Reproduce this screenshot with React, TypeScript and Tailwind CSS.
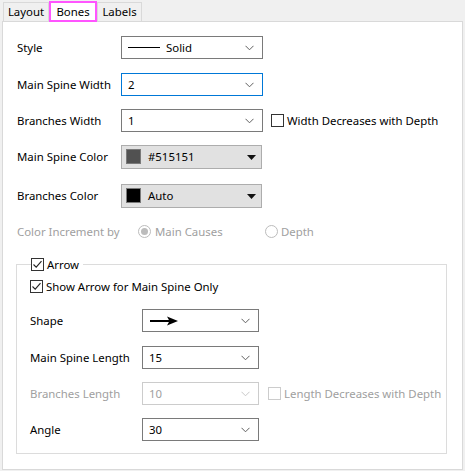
import React from "react";

const font = { fontFamily: '"Segoe UI", "Noto Sans", "Open Sans", sans-serif' };

function Chevron({ disabled }: { disabled?: boolean }) {
  return (
    <svg width="9" height="6" viewBox="0 0 9 6" className="shrink-0">
      <path d="M0.5 0.8 L4.5 4.8 L8.5 0.8" fill="none" stroke={disabled ? "#c8c8c8" : "#606060"} strokeWidth="1" />
    </svg>
  );
}

function Combo({
  children,
  width = "w-[142px]",
  focused,
  disabled,
}: {
  children: React.ReactNode;
  width?: string;
  focused?: boolean;
  disabled?: boolean;
}) {
  const border = focused ? "border-[#0078d7]" : disabled ? "border-[#cccccc]" : "border-[#7a7a7a]";
  return (
    <div
      className={`${width} h-[23px] border ${border} bg-white flex items-center justify-between pl-[6px] pr-[8px] ${
        disabled ? "text-[#a0a0a0]" : "text-black"
      }`}
    >
      <div className="flex items-center">{children}</div>
      <Chevron disabled={disabled} />
    </div>
  );
}

function ColorCombo({ swatch, label }: { swatch: string; label: string }) {
  return (
    <div className="w-[141px] h-[24px] border border-[#adadad] bg-[#e1e1e1] flex items-center justify-between pl-[4px] pr-[5px] text-black">
      <div className="flex items-center gap-[7px]">
        <div className="w-[15px] h-[15px] border border-[#7a7a7a]" style={{ backgroundColor: swatch }} />
        <span>{label}</span>
      </div>
      <svg width="9" height="5" viewBox="0 0 9 5">
        <path d="M0 0 H9 L4.5 5 Z" fill="#111" />
      </svg>
    </div>
  );
}

function Checkbox({ checked, disabled }: { checked?: boolean; disabled?: boolean }) {
  return (
    <div
      className={`w-[13px] h-[13px] border ${disabled ? "border-[#cccccc]" : "border-[#333333]"} bg-white flex items-center justify-center shrink-0`}
    >
      {checked && (
        <svg width="11" height="11" viewBox="0 0 11 11">
          <path d="M1.5 5.5 L4.2 8.2 L9.5 2.2" fill="none" stroke="#222" strokeWidth="1.1" />
        </svg>
      )}
    </div>
  );
}

function Radio({ selected }: { selected?: boolean }) {
  return (
    <div className="w-[13px] h-[13px] rounded-full border border-[#bcbcbc] bg-white flex items-center justify-center shrink-0">
      {selected && <div className="w-[7px] h-[7px] rounded-full bg-[#bcbcbc]" />}
    </div>
  );
}

function Row({ label, children, mt, labelW = "w-[104px]", dim }: { label: string; children: React.ReactNode; mt: string; labelW?: string; dim?: boolean }) {
  return (
    <div className={`flex items-center ${mt}`}>
      <div className={`${labelW} whitespace-nowrap ${dim ? "text-[#a0a0a0]" : "text-black"}`}>{label}</div>
      {children}
    </div>
  );
}

export default function App() {
  return (
    <div className="w-[465px] h-[471px] bg-[#f0f0f0] flex flex-col text-[11.4px]" style={font}>
      <div className="flex items-end h-[21px] pl-[3px] text-black">
        <div className="h-[19px] w-[46px] border border-b-0 border-[#d9d9d9] bg-[#f0f0f0] flex items-center justify-center">Layout</div>
        <div className="h-[21px] w-[48px] border-2 border-[#ff55ff] bg-white flex items-center justify-center -mb-px relative z-10">
          Bones
        </div>
        <div className="h-[19px] w-[45px] border border-b-0 border-[#d9d9d9] bg-[#f0f0f0] flex items-center justify-center">Labels</div>
      </div>
      <div className="mx-[2px] w-[461px] h-[449px] border border-[#d9d9d9] bg-white flex flex-col pl-[14px]">
        <Row label="Style" mt="mt-[14px]">
          <Combo>
            <div className="w-[32px] h-px bg-black mr-[6px]" />
            <span>Solid</span>
          </Combo>
        </Row>
        <Row label="Main Spine Width" mt="mt-[14px]">
          <Combo focused>2</Combo>
        </Row>
        <Row label="Branches Width" mt="mt-[13px]">
          <Combo>1</Combo>
          <div className="flex items-center ml-[8px] gap-[3px] whitespace-nowrap">
            <Checkbox />
            <span>Width Decreases with Depth</span>
          </div>
        </Row>
        <Row label="Main Spine Color" mt="mt-[13px]">
          <ColorCombo swatch="#515151" label="#515151" />
        </Row>
        <Row label="Branches Color" mt="mt-[15px]">
          <ColorCombo swatch="#000000" label="Auto" />
        </Row>
        <div className="flex items-center mt-[15px] h-[17px] text-[#a0a0a0]">
          <div className="w-[121px]">Color Increment by</div>
          <div className="flex items-center gap-[4px] w-[127px]">
            <Radio selected />
            <span>Main Causes</span>
          </div>
          <div className="flex items-center gap-[3px]">
            <Radio />
            <span>Depth</span>
          </div>
        </div>
        <fieldset className="mt-[16px] -ml-px w-[431px] border border-[#dcdcdc] pl-[13px] pb-[12px] pt-0">
          <legend className="ml-[1px] pl-0 pr-[4px] text-black">
            <div className="flex items-center gap-[3px]">
              <Checkbox checked />
              <span>Arrow</span>
            </div>
          </legend>
          <div className="flex items-center gap-[3px] text-black mt-[5px]">
            <Checkbox checked />
            <span>Show Arrow for Main Spine Only</span>
          </div>
          <Row label="Shape" mt="mt-[14px]" labelW="w-[112px]">
            <Combo width="w-[117px]">
              <svg width="28" height="10" viewBox="0 0 28 10" className="ml-px">
                <path d="M0 5 H20" stroke="#000" strokeWidth="2" />
                <path d="M28 5 L17 0.5 L19.5 5 L17 9.5 Z" fill="#000" />
              </svg>
            </Combo>
          </Row>
          <Row label="Main Spine Length" mt="mt-[14px]" labelW="w-[112px]">
            <Combo width="w-[117px]">15</Combo>
          </Row>
          <Row label="Branches Length" mt="mt-[13px]" labelW="w-[112px]" dim>
            <Combo width="w-[117px]" disabled>10</Combo>
            <div className="flex items-center ml-[9px] gap-[3px] whitespace-nowrap text-[#a0a0a0]">
              <Checkbox disabled />
              <span>Length Decreases with Depth</span>
            </div>
          </Row>
          <Row label="Angle" mt="mt-[13px]" labelW="w-[112px]">
            <Combo width="w-[117px]">30</Combo>
          </Row>
        </fieldset>
      </div>
    </div>
  );
}
